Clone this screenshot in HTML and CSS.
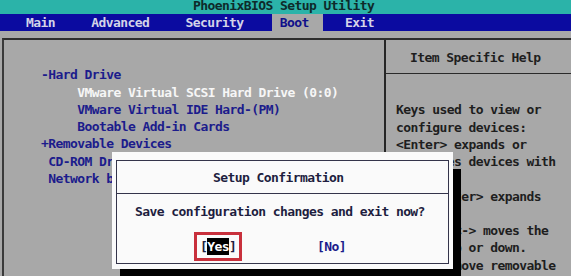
FILE: index.html
```html
<!DOCTYPE html>
<html lang="en">
<head>
<meta charset="utf-8">
<title>PhoenixBIOS Setup Utility</title>
<link rel="stylesheet" href="styles.css">
</head>
<body>
<div class="screen">
  <div class="titlebar">PhoenixBIOS Setup Utility</div>
  <nav class="menubar">
    <span class="menu-item">Main</span>
    <span class="menu-item">Advanced</span>
    <span class="menu-item">Security</span>
    <span class="menu-item active">Boot</span>
    <span class="menu-item">Exit</span>
  </nav>
  <div class="frame">
    <div class="panels">
      <div class="left-panel">
        <ul class="boot-list">
          <li class="group">-Hard Drive</li>
          <li class="sub selected">VMware Virtual SCSI Hard Drive (0:0)</li>
          <li class="sub">VMware Virtual IDE Hard-(PM)</li>
          <li class="sub">Bootable Add-in Cards</li>
          <li class="group">+Removable Devices</li>
          <li class="plain">CD-ROM Drive</li>
          <li class="plain">Network boot from AMD Am79C970A</li>
        </ul>
      </div>
      <div class="right-panel">
        <div class="help-title">Item Specific Help</div>
        <div class="help-text">
          <div>Keys used to view or</div>
          <div>configure devices:</div>
          <div>&lt;Enter&gt; expands or</div>
          <div>collapses devices with</div>
          <div>a + or -</div>
          <div>&lt;Ctrl+Enter&gt; expands</div>
          <div>all</div>
          <div>&lt;+&gt; and &lt;-&gt; moves the</div>
          <div>device up or down.</div>
          <div>&lt;n&gt; May move removable</div>
        </div>
      </div>
    </div>
  </div>
  <div class="dialog">
    <div class="dialog-inner">
      <div class="dialog-title">Setup Confirmation</div>
      <div class="dialog-message">Save configuration changes and exit now?</div>
      <div class="dialog-actions">
        <span class="btn btn-yes">[<span class="hl">Yes</span>]</span>
        <span class="btn btn-no">[No]</span>
      </div>
    </div>
  </div>
</div>
</body>
</html>
```
FILE: styles.css
```css
* {
  box-sizing: border-box;
  margin: 0;
  padding: 0;
}

html,
body {
  width: 571px;
  height: 276px;
  overflow: hidden;
}

body {
  background: #a8a8a8;
  font-family: "DejaVu Sans Mono", "Liberation Mono", monospace;
  font-weight: bold;
  font-size: 13px;
  letter-spacing: -0.58px;
}

.screen {
  position: relative;
  width: 571px;
  height: 276px;
}

.titlebar,
.menu-item,
.boot-list li,
.help-title,
.help-text div,
.dialog-title,
.dialog-message,
.btn {
  white-space: pre;
}

.titlebar {
  height: 14px;
  background: #2bb3a9;
  color: #0e2a2a;
  line-height: 12px;
  padding-left: 193px;
}

.menubar {
  height: 17px;
  background: #0b0ba0;
  display: flex;
  gap: 14.5px;
  padding-left: 18.75px;
  line-height: 17px;
}

.menu-item {
  color: #d4d4e8;
  padding: 0 14.5px 0 7.25px;
}

.menu-item.active {
  background: #a8a8a8;
  color: #10108a;
}

.frame {
  padding-top: 7px;
  height: 245px;
}

.panels {
  display: flex;
  height: 100%;
  margin-left: 2px;
  border-top: 2px solid #2e2e2e;
  border-left: 2px solid #3a3a3a;
}

.left-panel {
  width: 382px;
  padding: 26.4px 0 0 37px;
  border-right: 2px solid #262626;
}

.boot-list {
  list-style: none;
  line-height: 17.25px;
  color: #1c1c8c;
}

.boot-list .sub {
  padding-left: 36.25px;
}

.boot-list .plain {
  padding-left: 7.25px;
}

.boot-list .selected {
  color: #f6f6f6;
}

.right-panel {
  flex: 1;
  color: #1e1e1e;
}

.help-title {
  padding: 9px 0 7px 24px;
  line-height: 17px;
  border-bottom: 1px solid #2a2a2a;
}

.help-text {
  padding: 27.4px 0 0 10px;
  line-height: 17.25px;
}

.dialog {
  position: absolute;
  left: 112px;
  top: 152px;
  width: 341px;
  height: 117px;
  background: #fafafa;
  padding: 8px 4px 5px 4px;
  box-shadow: 8px 17px 0 0 #000;
  color: #1e1e40;
}

.dialog-inner {
  height: 100%;
  border: 1px solid #34344a;
}

.dialog-title {
  padding: 7.5px 0 7.5px 96px;
  line-height: 17px;
  border-bottom: 1px solid #34344a;
}

.dialog-message {
  padding: 9.4px 0 0 18px;
  line-height: 17.25px;
}

.dialog-actions {
  display: flex;
  gap: 80.75px;
  margin-top: 17.35px;
  padding-left: 83px;
  line-height: 17.25px;
}

.btn-yes {
  outline: 3px solid #c8303c;
  outline-offset: 3px;
}

.btn-yes .hl {
  display: inline-block;
  background: #000;
  color: #fff;
  line-height: 17px;
}

.btn-no {
  color: #1c1c8c;
}
```
